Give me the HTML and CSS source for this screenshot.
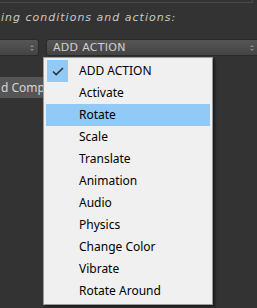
FILE: index.html
```html
<!DOCTYPE html>
<html lang="en">
<head>
    <meta charset="UTF-8">
    <title>Add Action</title>
    <link rel="stylesheet" href="styles.css">
</head>
<body>
    <!-- Edge of the panel above -->
    <div class="panel-top"></div>

    <p class="hint">ing conditions and actions:</p>

    <!-- Condition / action pickers -->
    <div class="picker-row">
        <div class="picker picker-cut"><span class="arrows"></span></div>
        <div class="picker picker-action">ADD ACTION<span class="arrows"></span></div>
    </div>

    <button class="btn-comp">d Comp</button>

    <!-- Open list of the action picker -->
    <ul class="menu">
        <li class="checked"><span class="tick"><svg width="12" height="9" viewBox="0 0 12 9"><path d="M1 4.5 L4.2 7.6 L11 1" fill="none" stroke="#333" stroke-width="1.6"/></svg></span>ADD ACTION</li>
        <li>Activate</li>
        <li class="hover">Rotate</li>
        <li>Scale</li>
        <li>Translate</li>
        <li>Animation</li>
        <li>Audio</li>
        <li>Physics</li>
        <li>Change Color</li>
        <li>Vibrate</li>
        <li>Rotate Around</li>
    </ul>
</body>
</html>
```

FILE: styles.css
```css
/* Dark editor background */
body {
    margin: 0;
    background: #333333;
    font-family: 'DejaVu Sans', sans-serif;
    position: relative;
    height: 308px;
    overflow: hidden;
}

.panel-top {
    width: 252px;
    height: 2px;
    border-bottom: 1px solid #4a4a4a;
    border-right: 1px solid #4a4a4a;
}

.hint {
    margin: 8px 0 0 1px;
    font-style: italic;
    font-size: 11px;
    letter-spacing: 1px;
    color: #c8c8c8;
}

/* Picker row */
.picker-row {
    display: flex;
    gap: 7px;
    margin-top: 15px;
}

.picker {
    position: relative;
    height: 15px;
    padding: 0 6px;
    border: 1px solid #2a2a2a;
    border-radius: 3px;
    background: linear-gradient(#555555, #444444);
    color: #d0d0d0;
    font-size: 11px;
    line-height: 16px;
    letter-spacing: 0.3px;
}

.picker-cut {
    width: 26px;
    border-left: none;
    border-radius: 0 3px 3px 0;
}

.picker-action {
    flex: 1;
    margin-right: -10px;
}

/* Tiny up/down arrows */
.arrows::before,
.arrows::after {
    content: '';
    position: absolute;
    right: 4px;
    border-left: 2px solid transparent;
    border-right: 2px solid transparent;
}
.arrows::before {
    top: 5px;
    border-bottom: 2px solid #888;
}
.arrows::after {
    top: 9px;
    border-top: 2px solid #888;
}
.picker-action .arrows::before,
.picker-action .arrows::after {
    right: 12px;
}

.btn-comp {
    display: block;
    margin-top: 21px;
    width: 44px;
    height: 21px;
    padding: 0 0 0 1px;
    border: none;
    border-radius: 0 2px 2px 0;
    background: #555555;
    color: #d6d6d6;
    font-family: 'Noto Sans', sans-serif;
    font-size: 12px;
    text-align: left;
    white-space: nowrap;
}

/* Dropdown list */
.menu {
    position: absolute;
    left: 43px;
    top: 57px;
    width: 164px;
    margin: 0;
    padding: 2px;
    list-style: none;
    background: #f0f0f0;
    border: 1px solid #9a9a9a;
    box-shadow: 2px 2px 2px rgba(0, 0, 0, 0.45);
    font-family: 'Noto Sans', sans-serif;
    font-size: 12px;
    color: #000;
}

.menu li {
    height: 22px;
    line-height: 22px;
    padding-left: 33px;
    position: relative;
}

.menu li.hover {
    background: #91c9f7;
}

.tick {
    position: absolute;
    left: 1px;
    top: 0;
    width: 21px;
    height: 22px;
    background: #91c9f7;
    display: flex;
    align-items: center;
    justify-content: center;
}
```
